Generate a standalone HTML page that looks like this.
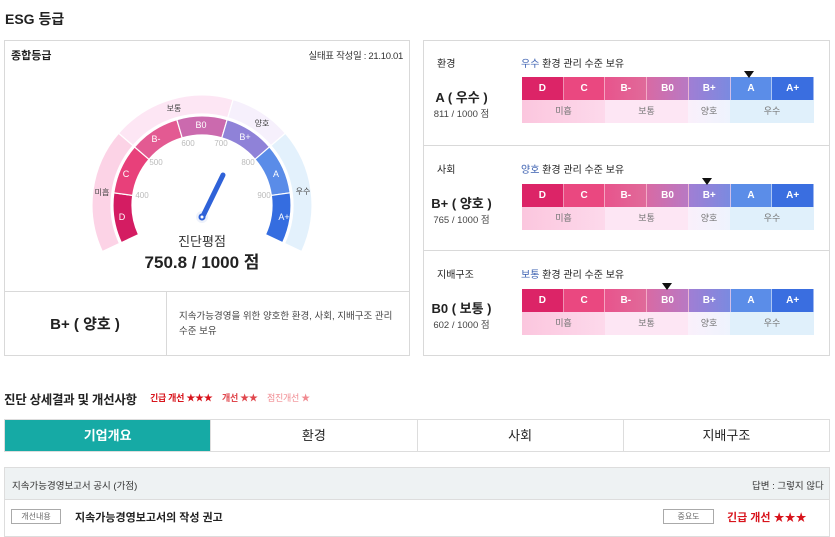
<!DOCTYPE html>
<html><head><meta charset="utf-8">
<style>
*{box-sizing:border-box;margin:0;padding:0}
body{width:835px;height:534px;background:#fff;font-family:"Liberation Sans","Noto Sans CJK KR",sans-serif;color:#222;position:relative;overflow:hidden}
.a{position:absolute;white-space:nowrap}
.box{position:absolute;border:1px solid #d9d9d9;background:#fff}
.bar{position:absolute;left:98px;width:292px;height:46px}
.bar .r{display:flex;height:23px}
.bar .t div{flex:1;color:#fff;font-size:10px;font-weight:bold;text-align:center;line-height:23px;border-right:1px solid rgba(255,255,255,.5)}
.bar .b div{font-size:9px;color:#777;text-align:center;line-height:23px}
.mk{position:absolute;top:-6px;width:0;height:0;border-left:5px solid transparent;border-right:5px solid transparent;border-top:7px solid #111}
.sec{position:absolute;left:0;width:406px;height:104px}
.tab{flex:1;text-align:center;line-height:32px;font-size:13px;border-right:1px solid #ddd}
</style></head><body>
<div class="a" style="left:5px;top:9px;font-size:14px;font-weight:bold">ESG 등급</div>

<div class="box" style="left:4px;top:40px;width:406px;height:316px"></div>
<div class="a" style="left:11px;top:47px;font-size:11px;font-weight:bold">종합등급</div>
<div class="a" style="right:432px;top:48px;font-size:9.5px;color:#333;letter-spacing:-0.3px">실태표 작성일 : 21.10.01</div>
<svg class="a" style="left:0;top:0" width="420" height="290" id="g">
<g id="arcs"></g>
<g font-size="9" fill="#fff" text-anchor="middle" font-family="Liberation Sans, Noto Sans CJK KR, sans-serif">
<text x="122" y="220">D</text><text x="126" y="177">C</text><text x="156" y="142">B-</text><text x="201" y="128">B0</text><text x="245" y="140">B+</text><text x="276" y="177">A</text><text x="284" y="220">A+</text>
</g>
<g font-size="8" fill="#444" text-anchor="middle" font-family="Liberation Sans, Noto Sans CJK KR, sans-serif">
<text x="102" y="195">미흡</text><text x="174" y="111">보통</text><text x="262" y="126">양호</text><text x="303" y="194">우수</text>
</g>
<g font-size="8" fill="#bbb" text-anchor="middle" font-family="Liberation Sans, sans-serif">
<text x="142" y="198">400</text><text x="156" y="165">500</text><text x="188" y="146">600</text><text x="221" y="146">700</text><text x="248" y="165">800</text><text x="264" y="198">900</text>
</g>
<circle cx="202" cy="217" r="6" fill="#eef2fb"/>
<line x1="203" y1="216" x2="223" y2="175" stroke="#2f62d8" stroke-width="5" stroke-linecap="round"/>
<circle cx="202" cy="217" r="3.5" fill="#2f62d8"/><circle cx="202" cy="217" r="1.5" fill="#fff"/>
<text x="202" y="246" font-size="13" text-anchor="middle" fill="#333" font-family="Liberation Sans, Noto Sans CJK KR, sans-serif">진단평점</text>
<text x="202" y="268" font-size="17" font-weight="bold" text-anchor="middle" fill="#222" font-family="Liberation Sans, Noto Sans CJK KR, sans-serif">750.8 / 1000 점</text>
</svg>
<div class="a" style="left:4px;top:291px;width:406px;border-top:1px solid #d9d9d9"></div>
<div class="a" style="left:166px;top:291px;height:65px;border-left:1px solid #d9d9d9"></div>
<div class="a" style="left:4px;top:313px;width:162px;text-align:center;font-size:15px;font-weight:bold">B+ ( 양호 )</div>
<div class="a" style="left:179px;top:309px;font-size:9.5px;color:#444;line-height:15px;white-space:normal;width:220px">지속가능경영을 위한 양호한 환경, 사회, 지배구조 관리 수준 보유</div>

<div class="box" style="left:423px;top:40px;width:407px;height:316px">
 <div class="sec" style="top:0">
  <div class="a" style="left:13px;top:14px;font-size:10px">환경</div>
  <div class="a" style="left:97px;top:14px;font-size:10px"><span style="color:#3a5fb0">우수</span> 환경 관리 수준 보유</div>
  <div class="a" style="left:0;width:75px;text-align:center;top:46px;font-size:13px;font-weight:bold">A ( 우수 )</div>
  <div class="a" style="left:0;width:75px;text-align:center;top:65px;font-size:9.5px;color:#444">811 / 1000 점</div>
  <div class="bar" style="top:36px"><div class="mk" style="left:222px"></div>
   <div class="r t"><div style="background:#dc2467">D</div><div style="background:#ea4880">C</div><div style="background:linear-gradient(90deg,#e8548c,#e06a9a)">B-</div><div style="background:linear-gradient(90deg,#d86aa4,#b879c4)">B0</div><div style="background:linear-gradient(90deg,#a07ed4,#7b8ae0)">B+</div><div style="background:#5b8de8">A</div><div style="background:#3a6ee0">A+</div></div>
   <div class="r b"><div style="width:83px;background:linear-gradient(90deg,#fbc6de,#fdd9eb)">미흡</div><div style="width:83px;background:#fde6f4">보통</div><div style="width:42px;background:linear-gradient(90deg,#faf0fb,#eef3fd)">양호</div><div style="width:84px;background:#e0f0fb">우수</div></div>
  </div>
 </div>
 <div class="sec" style="top:104px;border-top:1px solid #d9d9d9">
  <div class="a" style="left:13px;top:15px;font-size:10px">사회</div>
  <div class="a" style="left:97px;top:15px;font-size:10px"><span style="color:#3a5fb0">양호</span> 환경 관리 수준 보유</div>
  <div class="a" style="left:0;width:75px;text-align:center;top:47px;font-size:13px;font-weight:bold">B+ ( 양호 )</div>
  <div class="a" style="left:0;width:75px;text-align:center;top:66px;font-size:9.5px;color:#444">765 / 1000 점</div>
  <div class="bar" style="top:38px"><div class="mk" style="left:180px"></div>
   <div class="r t"><div style="background:#dc2467">D</div><div style="background:#ea4880">C</div><div style="background:linear-gradient(90deg,#e8548c,#e06a9a)">B-</div><div style="background:linear-gradient(90deg,#d86aa4,#b879c4)">B0</div><div style="background:linear-gradient(90deg,#a07ed4,#7b8ae0)">B+</div><div style="background:#5b8de8">A</div><div style="background:#3a6ee0">A+</div></div>
   <div class="r b"><div style="width:83px;background:linear-gradient(90deg,#fbc6de,#fdd9eb)">미흡</div><div style="width:83px;background:#fde6f4">보통</div><div style="width:42px;background:linear-gradient(90deg,#faf0fb,#eef3fd)">양호</div><div style="width:84px;background:#e0f0fb">우수</div></div>
  </div>
 </div>
 <div class="sec" style="top:209px;border-top:1px solid #d9d9d9">
  <div class="a" style="left:13px;top:15px;font-size:10px">지배구조</div>
  <div class="a" style="left:97px;top:15px;font-size:10px"><span style="color:#3a5fb0">보통</span> 환경 관리 수준 보유</div>
  <div class="a" style="left:0;width:75px;text-align:center;top:47px;font-size:13px;font-weight:bold">B0 ( 보통 )</div>
  <div class="a" style="left:0;width:75px;text-align:center;top:66px;font-size:9.5px;color:#444">602 / 1000 점</div>
  <div class="bar" style="top:38px"><div class="mk" style="left:140px"></div>
   <div class="r t"><div style="background:#dc2467">D</div><div style="background:#ea4880">C</div><div style="background:linear-gradient(90deg,#e8548c,#e06a9a)">B-</div><div style="background:linear-gradient(90deg,#d86aa4,#b879c4)">B0</div><div style="background:linear-gradient(90deg,#a07ed4,#7b8ae0)">B+</div><div style="background:#5b8de8">A</div><div style="background:#3a6ee0">A+</div></div>
   <div class="r b"><div style="width:83px;background:linear-gradient(90deg,#fbc6de,#fdd9eb)">미흡</div><div style="width:83px;background:#fde6f4">보통</div><div style="width:42px;background:linear-gradient(90deg,#faf0fb,#eef3fd)">양호</div><div style="width:84px;background:#e0f0fb">우수</div></div>
  </div>
 </div>
</div>

<div class="a" style="left:4px;top:389px;font-size:12.5px;font-weight:bold;letter-spacing:-0.3px">진단 상세결과 및 개선사항</div>
<div class="a" style="left:150px;top:391px;font-size:9px;font-weight:bold;color:#d8141c;letter-spacing:-0.3px">긴급 개선 ★★★</div>
<div class="a" style="left:222px;top:391px;font-size:9px;font-weight:bold;color:#e0474d;letter-spacing:-0.3px">개선 ★★</div>
<div class="a" style="left:267px;top:391px;font-size:9px;color:#f08a90;letter-spacing:-0.3px">점진개선 ★</div>

<div class="a" style="left:4px;top:419px;width:826px;height:33px;border:1px solid #ddd;display:flex">
 <div class="tab" style="background:#16aaa5;color:#fff;font-weight:bold">기업개요</div><div class="tab">환경</div><div class="tab">사회</div><div class="tab" style="border-right:0">지배구조</div>
</div>

<div class="a" style="left:4px;top:467px;width:826px;height:70px;border:1px solid #ddd"></div>
<div class="a" style="left:5px;top:468px;width:824px;height:32px;background:#eef2f3;border-bottom:1px solid #ddd"></div>
<div class="a" style="left:12px;top:478px;font-size:9.5px;color:#333">지속가능경영보고서 공시 (가점)</div>
<div class="a" style="left:752px;top:478px;font-size:9.5px;color:#333">답변 : 그렇지 않다</div>
<div class="a" style="left:11px;top:509px;width:50px;height:15px;border:1px solid #aaa;font-size:8px;color:#666;text-align:center;line-height:13px">개선내용</div>
<div class="a" style="left:75px;top:509px;font-size:11px;font-weight:bold">지속가능경영보고서의 작성 권고</div>
<div class="a" style="left:663px;top:509px;width:51px;height:15px;border:1px solid #aaa;font-size:8px;color:#666;text-align:center;line-height:13px">중요도</div>
<div class="a" style="left:727px;top:509px;font-size:11px;font-weight:bold;color:#d8141c">긴급 개선 ★★★</div>

<script>
(function(){
var cx=202,cy=205,ns="http://www.w3.org/2000/svg",g=document.getElementById('arcs');
function pt(r,a){a=a*Math.PI/180;return [cx+r*Math.cos(a),cy-r*Math.sin(a)];}
function seg(r1,r2,a1,a2,fill){
 var p1=pt(r2,a1),p2=pt(r2,a2),p3=pt(r1,a2),p4=pt(r1,a1),lg=(a1-a2)>180?1:0;
 var d="M"+p1+"A"+r2+","+r2+" 0 "+lg+" 1 "+p2+"L"+p3+"A"+r1+","+r1+" 0 "+lg+" 0 "+p4+"Z";
 var e=document.createElementNS(ns,'path');e.setAttribute('d',d);e.setAttribute('fill',fill);
 e.setAttribute('stroke','#fff');e.setAttribute('stroke-width','1.2');g.appendChild(e);}
var st=205,sw=230/7;
var c=['#d41c62','#e8407a','#e35a92','#cb6aae','#8f82d8','#5a8ce8','#356de0'];
for(var i=0;i<7;i++)seg(70,89,st-i*sw,st-(i+1)*sw,c[i]);
var oc=[['#fcd3e6',0,2],['#fde6f4',2,4],['#f6f0fc',4,5],['#e3f1fc',5,7]];
oc.forEach(function(o){seg(91,110,st-o[1]*sw,st-o[2]*sw,o[0]);});
})();
</script>
</body></html>
